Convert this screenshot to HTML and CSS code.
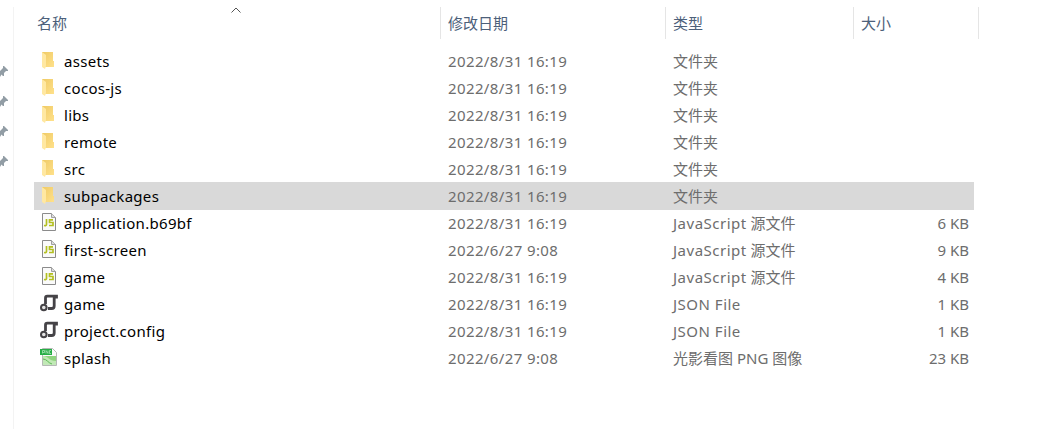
FILE: index.html
```
<!DOCTYPE html>
<html lang="zh-CN">
<head>
  <meta charset="utf-8">
  <title>Files</title>
  <link rel="stylesheet" href="styles.css">
</head>
<body>
  <!-- Icons shared by the rows -->
  <svg class="defs" width="0" height="0">
    <defs>
      <linearGradient id="fold" x1="0" x2="1" y1="0" y2="1">
        <stop offset="0" stop-color="#efca65"/>
        <stop offset="1" stop-color="#ffe18b"/>
      </linearGradient>
    </defs>
    <symbol id="pin" viewBox="0 0 8 12">
      <path d="M3 0h1l4 4v1H6L4 7v3H3L1.500 8.500 0 11V5l3-3z" fill="#929da5"/>
    </symbol>
    <symbol id="folder" viewBox="0 0 18 20">
      <path d="M2 2h11v9h1v6H2z" fill="url(#fold)"/>
      <path d="M2 2l4 3v11l-1 3-3-2z" fill="#ffe8a2"/>
    </symbol>
    <symbol id="js" viewBox="0 0 18 20">
      <path d="M2.500 1.500h9l4 4v13h-13z" fill="#fafafa" stroke="#8b8b8b"/>
      <path d="M11.500 1.500v4h4" fill="#ddd" stroke="#a0a0a0"/>
      <path d="M6.500 7v5.500q0 1.500-2.500 1M13 7.800H9.500v2.700H13v3H9" fill="none" stroke="#b3bf20" stroke-width="1.700"/>
    </symbol>
    <symbol id="json" viewBox="0 0 18 20">
      <path d="M5.500 11V5q0-1.800 1.800-1.800H16.500V5.500M14.200 4v9q0 2.500-2.500 2.500H8" fill="none" stroke="#454347" stroke-width="2.800"/>
      <circle cx="3.800" cy="14.500" r="2.800" fill="#e4e4e4" stroke="#454347" stroke-width="2"/>
    </symbol>
    <symbol id="png" viewBox="0 0 18 20">
      <path d="M2.500 1.500h10l4 4v13h-14z" fill="#fafafa" stroke="#b5b9b5"/>
      <path d="M3 9h13v8.500H3z" fill="#8fd47f"/>
      <path d="M3 9c5 0 6 5 13 5v3H3z" fill="#c1e9b5"/>
      <path d="M3 12c4 0 5 4 9 5" fill="none" stroke="#5fba58"/>
      <path d="M0 2h12v6H0z" fill="#27ae46"/>
      <path d="M2.500 6.500v-3h2v2h-2M6 6.500v-3l2 3v-3M11 3.500H9.500v3H11" fill="none" stroke="#b8e8c0" stroke-width=".7"/>
    </symbol>
  </svg>

  <div class="explorer">
    <div class="sidebar">
      <svg class="pin"><use href="#pin"/></svg>
      <svg class="pin"><use href="#pin"/></svg>
      <svg class="pin"><use href="#pin"/></svg>
      <svg class="pin"><use href="#pin"/></svg>
    </div>

    <div class="files">
      <div class="header">
        <div class="head">名称
          <svg class="sort" viewBox="0 0 10 6"><path d="M.5 5.500L5 1l4.500 4.500" fill="none" stroke="#555"/></svg>
        </div>
        <div class="head">修改日期</div>
        <div class="head">类型</div>
        <div class="head">大小</div>
      </div>

      <div class="row">
        <svg class="icon"><use href="#folder"/></svg><span class="name">assets</span>
        <span class="date">2022/8/31 16:19</span><span class="type">文件夹</span><span class="size"></span>
      </div>
      <div class="row">
        <svg class="icon"><use href="#folder"/></svg><span class="name">cocos-js</span>
        <span class="date">2022/8/31 16:19</span><span class="type">文件夹</span><span class="size"></span>
      </div>
      <div class="row">
        <svg class="icon"><use href="#folder"/></svg><span class="name">libs</span>
        <span class="date">2022/8/31 16:19</span><span class="type">文件夹</span><span class="size"></span>
      </div>
      <div class="row">
        <svg class="icon"><use href="#folder"/></svg><span class="name">remote</span>
        <span class="date">2022/8/31 16:19</span><span class="type">文件夹</span><span class="size"></span>
      </div>
      <div class="row">
        <svg class="icon"><use href="#folder"/></svg><span class="name">src</span>
        <span class="date">2022/8/31 16:19</span><span class="type">文件夹</span><span class="size"></span>
      </div>
      <div class="row selected">
        <svg class="icon"><use href="#folder"/></svg><span class="name">subpackages</span>
        <span class="date">2022/8/31 16:19</span><span class="type">文件夹</span><span class="size"></span>
      </div>
      <div class="row">
        <svg class="icon"><use href="#js"/></svg><span class="name">application.b69bf</span>
        <span class="date">2022/8/31 16:19</span><span class="type"><span class="latin">JavaScript</span> 源文件</span><span class="size">6 KB</span>
      </div>
      <div class="row">
        <svg class="icon"><use href="#js"/></svg><span class="name">first-screen</span>
        <span class="date">2022/6/27 9:08</span><span class="type"><span class="latin">JavaScript</span> 源文件</span><span class="size">9 KB</span>
      </div>
      <div class="row">
        <svg class="icon"><use href="#js"/></svg><span class="name">game</span>
        <span class="date">2022/8/31 16:19</span><span class="type"><span class="latin">JavaScript</span> 源文件</span><span class="size">4 KB</span>
      </div>
      <div class="row">
        <svg class="icon"><use href="#json"/></svg><span class="name">game</span>
        <span class="date">2022/8/31 16:19</span><span class="type"><span class="latin">JSON File</span></span><span class="size">1 KB</span>
      </div>
      <div class="row">
        <svg class="icon"><use href="#json"/></svg><span class="name">project.config</span>
        <span class="date">2022/8/31 16:19</span><span class="type"><span class="latin">JSON File</span></span><span class="size">1 KB</span>
      </div>
      <div class="row">
        <svg class="icon"><use href="#png"/></svg><span class="name">splash</span>
        <span class="date">2022/6/27 9:08</span><span class="type">光影看图 PNG 图像</span><span class="size">23 KB</span>
      </div>
    </div>
  </div>
</body>
</html>
```
FILE: styles.css
```
body {
  margin: 0;
  background: #fff;
  font-family: "Noto Sans", "Noto Sans CJK SC", sans-serif;
  font-size: 15px;
  color: #6d6d6d;
  overflow: hidden;
}

.defs {
  position: absolute;
}

.explorer {
  display: flex;
  height: 422px;
  padding-top: 7px;
}

.sidebar {
  display: flex;
  flex-direction: column;
  gap: 18px;
  box-sizing: border-box;
  width: 14px;
  padding-top: 59px;
  border-right: 1px solid #f3f3f3;
}

.pin {
  width: 8px;
  height: 12px;
}

.files {
  width: 965px;
  padding-left: 20px;
}

.header {
  display: grid;
  grid-template-columns: 407px 225px 188px 125px;
  height: 32px;
  margin-bottom: 8px;
  line-height: 32px;
  color: #4c607a;
}

.head {
  position: relative;
  padding-left: 7px;
  border-right: 1px solid #e5e5e5;
}

.head:first-child {
  padding-left: 3px;
}

/* Sort arrow above the column title */
.sort {
  position: absolute;
  top: 0;
  left: 197px;
  width: 10px;
  height: 6px;
}

.row {
  display: grid;
  grid-template-columns: 30px 384px 225px 188px 108px;
  width: 940px;
  height: 27px;
  line-height: 29px;
  white-space: nowrap;
}

.selected {
  height: 28px;
  margin-bottom: -1px;
  background: #d9d9d9;
}

.icon {
  width: 18px;
  height: 20px;
  margin: 3px 0 0 6px;
}

.name {
  color: #000;
  letter-spacing: 0.3px;
}

.date {
  letter-spacing: 0.38px;
}

.latin {
  letter-spacing: 0.5px;
}

.size {
  text-align: right;
}
```
